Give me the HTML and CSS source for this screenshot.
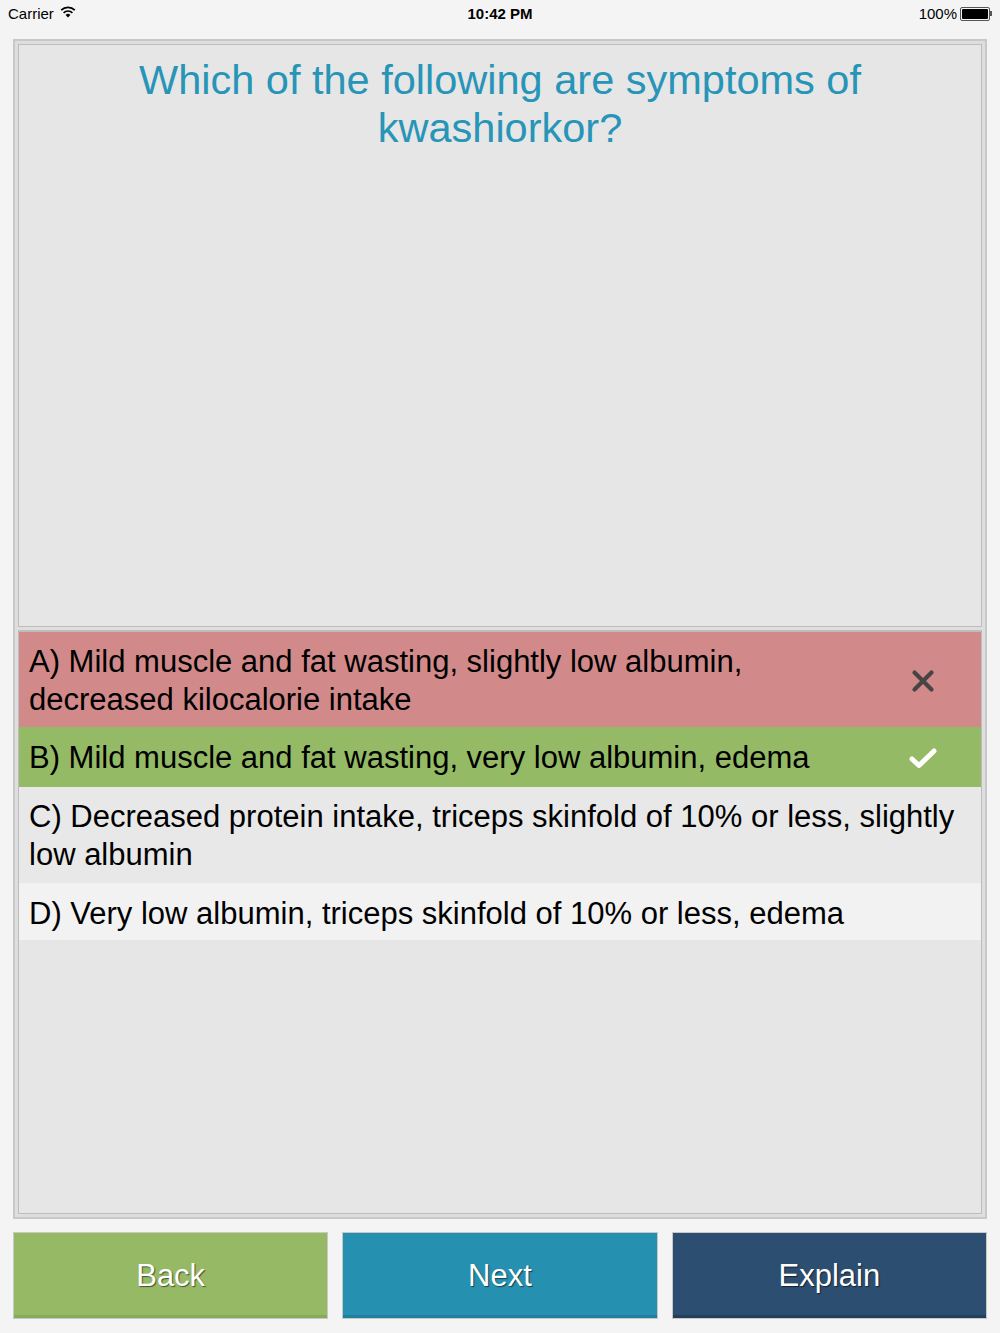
FILE: index.html
```html
<!DOCTYPE html>
<html>
<head>
<meta charset="utf-8">
<link rel="stylesheet" href="styles.css">
</head>
<body>
<div class="status">
  <div class="status-left">Carrier
    <svg class="wifi" width="16" height="12" viewBox="0 0 16 12"><path d="M8 11.5 L5.6 8.9 A3.4 3.4 0 0 1 10.4 8.9 Z" fill="#000"/><path d="M3.6 6.8 A6.3 6.3 0 0 1 12.4 6.8" stroke="#000" stroke-width="1.7" fill="none"/><path d="M1.2 4.2 A9.6 9.6 0 0 1 14.8 4.2" stroke="#000" stroke-width="1.7" fill="none"/></svg>
  </div>
  <div class="status-time">10:42 PM</div>
  <div class="status-right">100%
    <span class="battery"><span class="battery-fill"></span></span><span class="battery-tip"></span>
  </div>
</div>
<div class="panel">
  <div class="question">Which of the following are symptoms of kwashiorkor?</div>
  <div class="answers">
    <div class="answer wrong">
      <span class="answer-text">A) Mild muscle and fat wasting, slightly low albumin, decreased kilocalorie intake</span>
      <svg class="icon" width="24" height="24" viewBox="0 0 24 24"><path d="M3.5 3.5 L20.5 20.5 M20.5 3.5 L3.5 20.5" stroke="#454545" stroke-width="4.2" stroke-linecap="round"/></svg>
    </div>
    <div class="answer right">
      <span class="answer-text">B) Mild muscle and fat wasting, very low albumin, edema</span>
      <svg class="icon icon-check" width="28" height="24" viewBox="0 0 28 24"><path d="M3 13 L10 19.5 L25 5" stroke="#fff" stroke-width="5" fill="none" stroke-linecap="round" stroke-linejoin="round"/></svg>
    </div>
    <div class="answer plain">
      <span class="answer-text">C) Decreased protein intake, triceps skinfold of 10% or less, slightly low albumin</span>
    </div>
    <div class="answer light">
      <span class="answer-text">D) Very low albumin, triceps skinfold of 10% or less, edema</span>
    </div>
  </div>
</div>
<div class="buttons">
  <div class="btn back">Back</div>
  <div class="btn next">Next</div>
  <div class="btn explain">Explain</div>
</div>
</body>
</html>
```
FILE: styles.css
```css
html, body {
  margin: 0;
  padding: 0;
  background: #f4f4f4;
  font-family: "Liberation Sans", Arial, sans-serif;
}
.status {
  height: 27px;
  display: flex;
  align-items: center;
  justify-content: space-between;
  padding: 0 8px;
  font-size: 15px;
  color: #000;
  position: relative;
}
.status-left {
  display: flex;
  align-items: center;
  gap: 6px;
}
.wifi { margin-top: -3px; }
.status-time {
  position: absolute;
  left: 0;
  right: 0;
  text-align: center;
  font-weight: bold;
  font-size: 15px;
}
.status-right {
  display: flex;
  align-items: center;
  gap: 3px;
}
.battery {
  display: inline-block;
  width: 26px;
  height: 10px;
  border: 1px solid #555;
  border-radius: 2px;
  padding: 1px;
  box-sizing: content-box;
}
.battery-fill {
  display: block;
  width: 100%;
  height: 100%;
  background: #000;
  border-radius: 1px;
}
.battery-tip {
  display: inline-block;
  width: 2px;
  height: 5px;
  background: #555;
  margin-left: -3px;
}
.panel {
  margin: 12px 13px 0;
  height: 1180px;
  box-sizing: border-box;
  border: 2px solid #c8c8c8;
  padding: 3px;
  background: #dedede;
  display: flex;
  flex-direction: column;
  gap: 3px;
}
.question {
  height: 583px;
  box-sizing: border-box;
  border: 1px solid #bdbdbd;
  background: #e6e6e6;
  color: #2795b7;
  font-size: 41.5px;
  line-height: 48px;
  text-align: center;
  padding: 11px 100px 0;
}
.answers {
  flex: 1;
  border: 1px solid #bdbdbd;
  border-top-width: 2px;
  background: #e6e6e6;
}
.answer {
  display: flex;
  align-items: center;
  padding: 11px 10px 8px 10px;
  font-size: 31px;
  line-height: 38px;
  color: #000;
}
.answer-text { flex: 1; }
.answer.right { padding: 12px 10px 10px 10px; }
.answer.plain { padding: 11px 10px 9px 10px; }
.answer.light { padding: 12px 10px 7px 10px; }
.icon { flex: none; margin: 0 36px 0 40px; }
.icon-check { margin-right: 34px; }
.wrong { background: #d18a89; }
.right { background: #95ba65; }
.plain { background: #e8e8e8; }
.light { background: #f2f2f2; }
.buttons {
  display: flex;
  gap: 14px;
  margin: 13px 13px 0;
}
.btn {
  flex: 1;
  height: 87px;
  box-sizing: border-box;
  border: 1px solid #c8c8c8;
  display: flex;
  align-items: center;
  justify-content: center;
  color: #fff;
  font-size: 31px;
  text-shadow: 1px 1px 1px rgba(0,0,0,0.55);
}
.back { background: #95b965; box-shadow: inset 0 -3px 0 #87a95a; }
.next { background: #2590b0; box-shadow: inset 0 -3px 0 #1f7f9c; }
.explain { background: #2c4e70; box-shadow: inset 0 -3px 0 #243f5c; }
```
